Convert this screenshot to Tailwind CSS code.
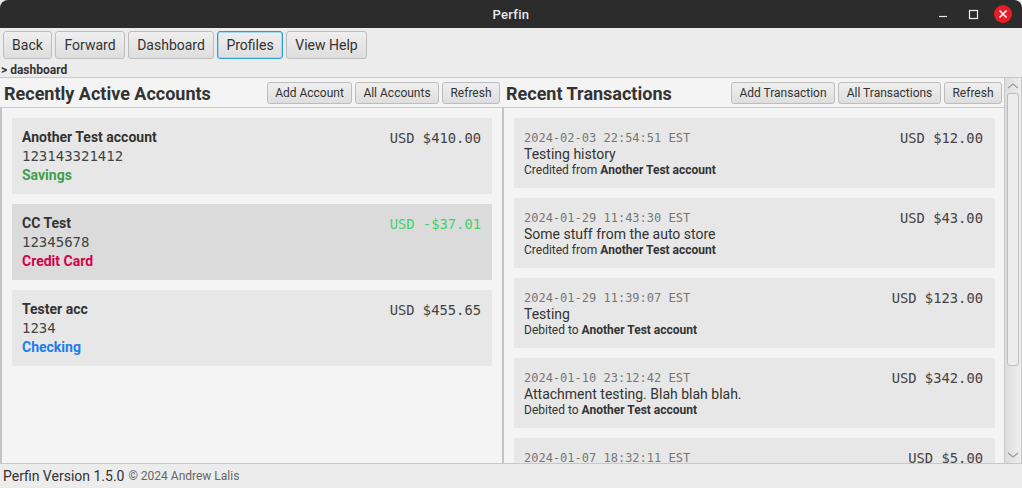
<!DOCTYPE html>
<html lang="en">
<head>
    <meta charset="UTF-8">
    <title>Perfin</title>
    <script src="https://cdn.jsdelivr.net/npm/@tailwindcss/browser@4"></script>
</head>
<body class="w-[1022px] h-[488px] overflow-hidden flex flex-col bg-[#ececec] text-[#333] font-['Roboto',sans-serif]">

    <header class="h-[28px] shrink-0 bg-[#2c2c2c] rounded-t-[8px] flex items-center relative">
        <h1 class="w-full text-center text-[13px] leading-[16px] pt-[2px] font-medium text-[#e8e8e8] tracking-[0.3px]">Perfin</h1>
        <div class="absolute right-[10px] top-[5px] flex items-center">
            <svg width="18" height="18" viewBox="0 0 18 18" class="mr-[12px]"><path d="M5 11.5h8" stroke="#e6e6e6" stroke-width="1.2"/></svg>
            <svg width="18" height="18" viewBox="0 0 18 18" class="mr-[12px]"><rect x="5.5" y="5.5" width="8" height="8" fill="none" stroke="#eee" stroke-width="1.2"/></svg>
            <svg width="18" height="18" viewBox="0 0 18 18"><circle cx="9" cy="9" r="9" fill="#ea1d25"/><path d="M5.5 5.5l7 7M12.5 5.5l-7 7" stroke="#fff" stroke-width="1.6"/></svg>
        </div>
    </header>

    <nav class="h-[34px] shrink-0 flex items-center gap-[3px] pl-[3px]">
        <button class="h-[28px] w-[49px] rounded-[3px] border border-[#bdbdbd] bg-gradient-to-b from-[#efefef] to-[#dedede] text-[14px]">Back</button>
        <button class="h-[28px] w-[70px] rounded-[3px] border border-[#bdbdbd] bg-gradient-to-b from-[#efefef] to-[#dedede] text-[14px]">Forward</button>
        <button class="h-[28px] w-[86px] rounded-[3px] border border-[#bdbdbd] bg-gradient-to-b from-[#efefef] to-[#dedede] text-[14px]">Dashboard</button>
        <button class="h-[28px] w-[66px] rounded-[3px] border border-[#2a9fd6] shadow-[inset_0_0_0_1px_#a9d8ee] bg-gradient-to-b from-[#efefef] to-[#dedede] text-[14px]">Profiles</button>
        <button class="h-[28px] w-[81px] rounded-[3px] border border-[#bdbdbd] bg-gradient-to-b from-[#efefef] to-[#dedede] text-[14px]">View Help</button>
    </nav>

    <div class="h-[15px] shrink-0 text-[12px] leading-[16px] font-bold pl-[1px]">&gt; dashboard</div>

    <main class="h-[387px] shrink-0 flex border-y border-[#c8c8c8] bg-[#f4f4f4] overflow-hidden">

        <section class="w-[504px] shrink-0 flex flex-col">
            <div class="h-[30px] shrink-0 flex items-center gap-[3px] pr-[4px] pl-[4px] border-b border-[#c8c8c8]">
                <h2 class="text-[18px] pt-[1px] font-bold mr-auto">Recently Active Accounts</h2>
                <button class="h-[22px] w-[85px] rounded-[3px] border border-[#bdbdbd] bg-gradient-to-b from-[#efefef] to-[#dedede] text-[12px]">Add Account</button>
                <button class="h-[22px] w-[84px] rounded-[3px] border border-[#bdbdbd] bg-gradient-to-b from-[#efefef] to-[#dedede] text-[12px]">All Accounts</button>
                <button class="h-[22px] w-[58px] rounded-[3px] border border-[#bdbdbd] bg-gradient-to-b from-[#efefef] to-[#dedede] text-[12px]">Refresh</button>
            </div>
            <div class="flex-1 flex flex-col gap-[10px] pt-[10px] px-[10px] border-x-2 border-[#c4c4c4]">
                <div class="h-[76px] bg-[#e7e7e7] pl-[10px] pr-[11px] py-[10px] flex justify-between">
                    <div>
                        <div class="text-[14px] leading-[19px] font-bold">Another Test account</div>
                        <div class="font-['DejaVu_Sans_Mono',monospace] text-[14px] leading-[19px] text-[#444]">123143321412</div>
                        <div class="text-[14px] leading-[19px] font-bold text-[#3f9f4f]">Savings</div>
                    </div>
                    <div class="pt-[1px] font-['DejaVu_Sans_Mono',monospace] text-[13.8px] leading-[19px] text-[#444]">USD $410.00</div>
                </div>
                <div class="h-[76px] bg-[#dbdbdb] pl-[10px] pr-[11px] py-[10px] flex justify-between">
                    <div>
                        <div class="text-[14px] leading-[19px] font-bold">CC Test</div>
                        <div class="font-['DejaVu_Sans_Mono',monospace] text-[14px] leading-[19px] text-[#444]">12345678</div>
                        <div class="text-[14px] leading-[19px] font-bold text-[#d4024c]">Credit Card</div>
                    </div>
                    <div class="pt-[1px] font-['DejaVu_Sans_Mono',monospace] text-[13.8px] leading-[19px] text-[#41d36a]">USD -$37.01</div>
                </div>
                <div class="h-[76px] bg-[#e7e7e7] pl-[10px] pr-[11px] py-[10px] flex justify-between">
                    <div>
                        <div class="text-[14px] leading-[19px] font-bold">Tester acc</div>
                        <div class="font-['DejaVu_Sans_Mono',monospace] text-[14px] leading-[19px] text-[#444]">1234</div>
                        <div class="text-[14px] leading-[19px] font-bold text-[#1a7ff0]">Checking</div>
                    </div>
                    <div class="pt-[1px] font-['DejaVu_Sans_Mono',monospace] text-[13.8px] leading-[19px] text-[#444]">USD $455.65</div>
                </div>
            </div>
        </section>

        <section class="flex-1 min-w-0 flex flex-col relative">
            <div class="h-[30px] shrink-0 flex items-center gap-[3px] pl-[2px] pr-[20px] border-b border-[#c8c8c8]">
                <h2 class="text-[18px] pt-[1px] font-bold mr-auto">Recent Transactions</h2>
                <button class="h-[22px] w-[104px] rounded-[3px] border border-[#bdbdbd] bg-gradient-to-b from-[#efefef] to-[#dedede] text-[12px]">Add Transaction</button>
                <button class="h-[22px] w-[103px] rounded-[3px] border border-[#bdbdbd] bg-gradient-to-b from-[#efefef] to-[#dedede] text-[12px]">All Transactions</button>
                <button class="h-[22px] w-[58px] rounded-[3px] border border-[#bdbdbd] bg-gradient-to-b from-[#efefef] to-[#dedede] text-[12px]">Refresh</button>
            </div>
            <div class="flex-1 min-h-0 flex flex-col gap-[10px] pt-[10px] pl-[10px] pr-[27px] overflow-hidden">
                <div class="h-[70px] shrink-0 bg-[#e7e7e7] pl-[10px] pr-[12px] flex justify-between">
                    <div class="pt-[12px]">
                        <div class="font-['DejaVu_Sans_Mono',monospace] text-[12px] leading-[16px] text-[#777]">2024-02-03 22:54:51 EST</div>
                        <div class="text-[14px] leading-[17px]">Testing history</div>
                        <div class="text-[12px] leading-[15px]">Credited from <b>Another Test account</b></div>
                    </div>
                    <div class="pt-[11px] font-['DejaVu_Sans_Mono',monospace] text-[13.8px] leading-[19px] text-[#444]">USD $12.00</div>
                </div>
                <div class="h-[70px] shrink-0 bg-[#e7e7e7] pl-[10px] pr-[12px] flex justify-between">
                    <div class="pt-[12px]">
                        <div class="font-['DejaVu_Sans_Mono',monospace] text-[12px] leading-[16px] text-[#777]">2024-01-29 11:43:30 EST</div>
                        <div class="text-[14px] leading-[17px]">Some stuff from the auto store</div>
                        <div class="text-[12px] leading-[15px]">Credited from <b>Another Test account</b></div>
                    </div>
                    <div class="pt-[11px] font-['DejaVu_Sans_Mono',monospace] text-[13.8px] leading-[19px] text-[#444]">USD $43.00</div>
                </div>
                <div class="h-[70px] shrink-0 bg-[#e7e7e7] pl-[10px] pr-[12px] flex justify-between">
                    <div class="pt-[12px]">
                        <div class="font-['DejaVu_Sans_Mono',monospace] text-[12px] leading-[16px] text-[#777]">2024-01-29 11:39:07 EST</div>
                        <div class="text-[14px] leading-[17px]">Testing</div>
                        <div class="text-[12px] leading-[15px]">Debited to <b>Another Test account</b></div>
                    </div>
                    <div class="pt-[11px] font-['DejaVu_Sans_Mono',monospace] text-[13.8px] leading-[19px] text-[#444]">USD $123.00</div>
                </div>
                <div class="h-[70px] shrink-0 bg-[#e7e7e7] pl-[10px] pr-[12px] flex justify-between">
                    <div class="pt-[12px]">
                        <div class="font-['DejaVu_Sans_Mono',monospace] text-[12px] leading-[16px] text-[#777]">2024-01-10 23:12:42 EST</div>
                        <div class="text-[14px] leading-[17px]">Attachment testing. Blah blah blah.</div>
                        <div class="text-[12px] leading-[15px]">Debited to <b>Another Test account</b></div>
                    </div>
                    <div class="pt-[11px] font-['DejaVu_Sans_Mono',monospace] text-[13.8px] leading-[19px] text-[#444]">USD $342.00</div>
                </div>
                <div class="h-[70px] shrink-0 bg-[#e7e7e7] pl-[10px] pr-[12px] flex justify-between">
                    <div class="pt-[12px]">
                        <div class="font-['DejaVu_Sans_Mono',monospace] text-[12px] leading-[16px] text-[#777]">2024-01-07 18:32:11 EST</div>
                    </div>
                    <div class="pt-[11px] font-['DejaVu_Sans_Mono',monospace] text-[13.8px] leading-[19px] text-[#444]">USD $5.00</div>
                </div>
            </div>
            <div class="absolute right-0 top-0 bottom-0 w-[18px] bg-gradient-to-r from-[#dcdcdc] to-[#eeeeee] border-x border-[#c8c8c8] flex flex-col items-center">
                <svg width="14" height="15" viewBox="0 0 14 15" class="shrink-0"><path d="M2 10l5-4 5 4" fill="none" stroke="#999" stroke-width="1.2"/></svg>
                <div class="w-[12px] h-[273px] rounded-[3px] border border-[#bdbdbd] bg-[#ececec]"></div>
                <svg width="14" height="15" viewBox="0 0 14 15" class="shrink-0 mt-auto"><path d="M2 5l5 4 5-4" fill="none" stroke="#999" stroke-width="1.2"/></svg>
            </div>
        </section>
    </main>

    <footer class="flex-1 flex items-center pl-[3px] gap-[4px]">
        <span class="text-[14px]">Perfin Version 1.5.0</span>
        <span class="text-[12px] text-[#666]">© 2024 Andrew Lalis</span>
    </footer>
</body>
</html>
